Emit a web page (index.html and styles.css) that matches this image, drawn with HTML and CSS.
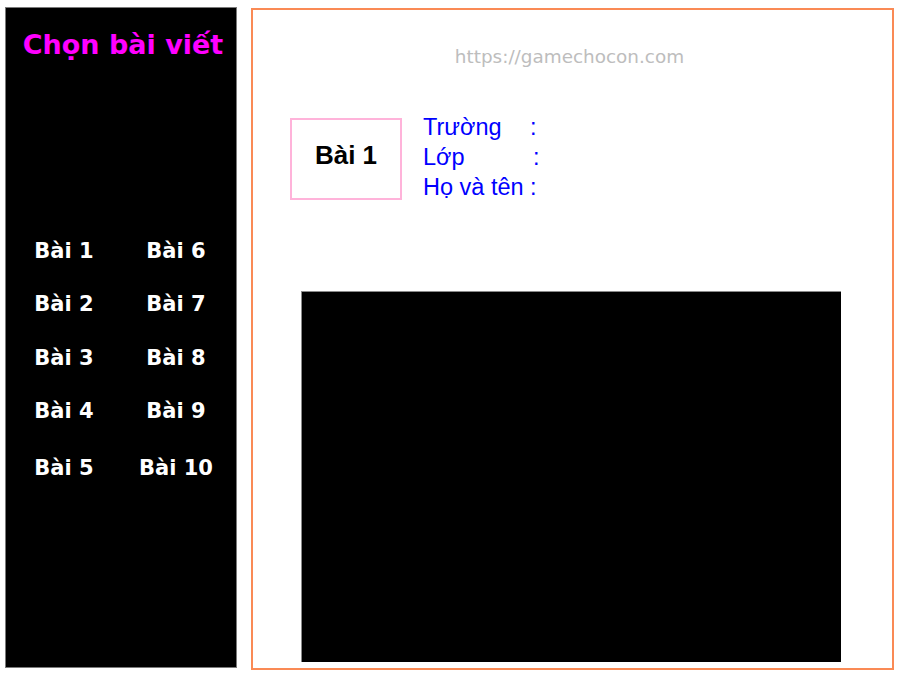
FILE: index.html
```html
<!DOCTYPE html>
<html lang="vi">
<head>
<meta charset="utf-8">
<title>Chọn bài viết</title>
<link rel="stylesheet" href="styles.css">
</head>
<body>
<div class="page">
  <aside class="sidebar">
    <h1 class="side-title">Chọn bài viết</h1>
    <ul class="lesson-grid">
      <li>Bài 1</li><li>Bài 6</li>
      <li>Bài 2</li><li>Bài 7</li>
      <li>Bài 3</li><li>Bài 8</li>
      <li>Bài 4</li><li>Bài 9</li>
      <li>Bài 5</li><li>Bài 10</li>
    </ul>
  </aside>
  <main class="sheet">
    <div class="url">https://gamechocon.com</div>
    <div class="head">
      <div class="lesson-box">Bài 1</div>
      <div class="info">
        <div class="info-row"><span class="lbl lbl-a">Trường</span>:</div>
        <div class="info-row"><span class="lbl lbl-b">Lớp</span>:</div>
        <div class="info-row">Họ và tên&nbsp;:</div>
      </div>
    </div>
    <div class="viewer"></div>
  </main>
</div>
</body>
</html>
```
FILE: styles.css
```css
html, body {
  margin: 0;
  padding: 0;
  background: #ffffff;
}
.page {
  display: flex;
  align-items: flex-start;
  padding: 7px 0 0 5px;
  gap: 14px;
}
.sidebar {
  box-sizing: border-box;
  width: 232px;
  height: 661px;
  background: #000;
  border: 1px solid #7a7a7a;
  padding-top: 22px;
  font-family: "DejaVu Sans", Verdana, sans-serif;
}
.side-title {
  margin: 0;
  padding-left: 4px;
  font-size: 27px;
  line-height: 30px;
  font-weight: bold;
  color: #ff00ff;
  text-align: center;
}
.lesson-grid {
  list-style: none;
  margin: 164px 0 0 0;
  padding: 0;
  display: grid;
  grid-template-columns: 116px 108px;
  grid-template-rows: 53.5px 53.5px 53.5px 53.5px 60.5px;
  align-items: center;
  justify-items: center;
}
.lesson-grid li {
  color: #fff;
  font-size: 21px;
  line-height: 24px;
  font-weight: bold;
}
.sheet {
  box-sizing: border-box;
  margin-top: 1px;
  width: 643px;
  height: 662px;
  border: 2px solid #fa8a55;
  padding-top: 36px;
  display: flex;
  flex-direction: column;
}
.url {
  font-family: "DejaVu Sans", Verdana, sans-serif;
  font-size: 18.4px;
  line-height: 22px;
  color: #bdbdbd;
  text-align: center;
  padding-right: 6px;
}
.head {
  margin-top: 44px;
  display: flex;
  align-items: flex-start;
  padding-left: 37px;
  gap: 21px;
}
.lesson-box {
  box-sizing: border-box;
  width: 112px;
  height: 82px;
  margin-top: 6px;
  border: 2px solid #ffb3da;
  padding-top: 20px;
  text-align: center;
  font-family: "Liberation Sans", Arial, sans-serif;
  font-weight: bold;
  font-size: 26px;
  line-height: 30px;
  color: #000;
}
.info {
  font-family: "Liberation Sans", Arial, sans-serif;
  font-size: 23.5px;
  line-height: 30px;
  color: #0000ff;
}
.info-row {
  white-space: nowrap;
}
.lbl {
  display: inline-block;
}
.lbl-a { width: 107px; }
.lbl-b { width: 110px; }
.viewer {
  box-sizing: border-box;
  width: 540px;
  height: 371px;
  margin: 89px 0 0 48px;
  background: #000;
  border-top: 1px solid #8a8a8a;
  border-left: 1px solid #8a8a8a;
}
```
